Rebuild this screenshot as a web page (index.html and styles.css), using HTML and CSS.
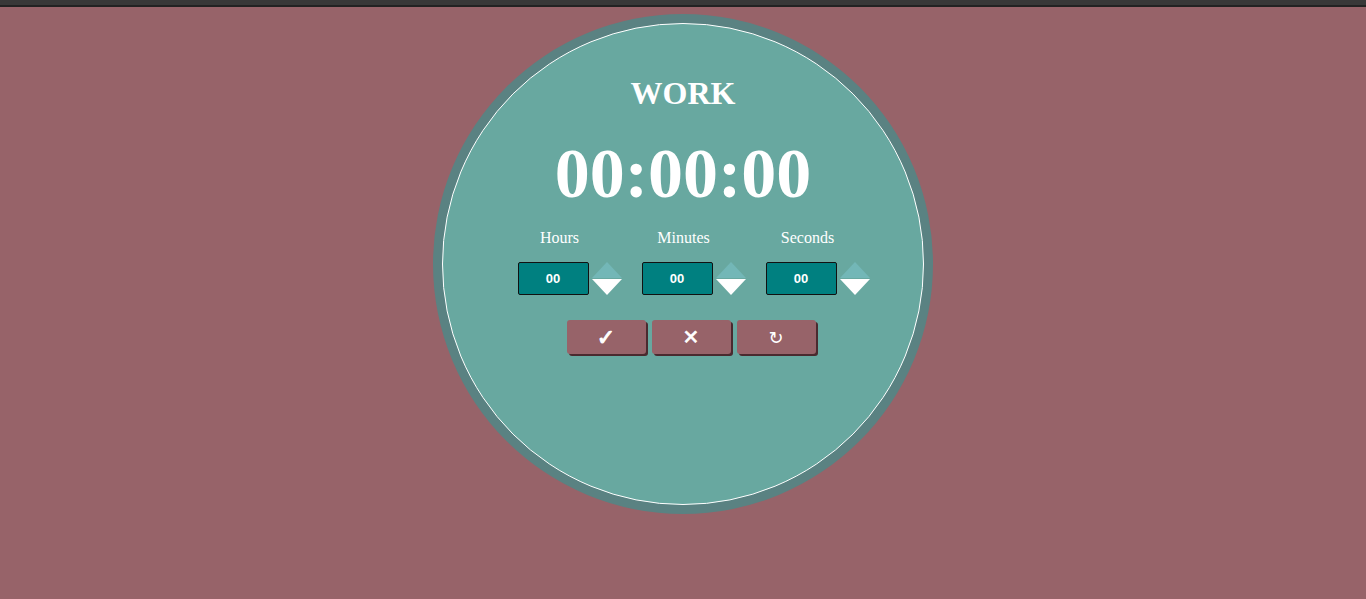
FILE: index.html
```html
<!DOCTYPE html>
<html>
<head>
<meta charset="utf-8">
<link rel="stylesheet" href="styles.css">
</head>
<body>
<div class="topbar"></div>
<main class="stage">
  <div class="ring">
    <div class="face">
      <h1 class="mode">WORK</h1>
      <div class="clock">00:00:00</div>
      <div class="fields">
        <div class="field">
          <div class="label">Hours</div>
          <div class="control">
            <div class="num">00</div>
            <div class="arrows"><span class="up"></span><span class="down"></span></div>
          </div>
        </div>
        <div class="field">
          <div class="label">Minutes</div>
          <div class="control">
            <div class="num">00</div>
            <div class="arrows"><span class="up"></span><span class="down"></span></div>
          </div>
        </div>
        <div class="field">
          <div class="label">Seconds</div>
          <div class="control">
            <div class="num">00</div>
            <div class="arrows"><span class="up"></span><span class="down"></span></div>
          </div>
        </div>
      </div>
      <div class="buttons">
        <button class="btn btn-ok">✓</button>
        <button class="btn btn-x">✕</button>
        <button class="btn btn-reset">↻</button>
      </div>
    </div>
  </div>
</main>
</body>
</html>
```

FILE: styles.css
```css
html, body {
  margin: 0;
  padding: 0;
  background: #976369;
  height: 100%;
  overflow: hidden;
}
body {
  font-family: "Liberation Serif", "Times New Roman", serif;
  color: #fff;
}
.topbar {
  height: 5px;
  background: #383838;
  border-bottom: 2px solid #222;
}
.stage {
  display: flex;
  justify-content: center;
  padding-top: 7px;
}
.ring {
  width: 500px;
  height: 500px;
  box-sizing: border-box;
  border-radius: 50%;
  background: #5a8282;
  padding: 9px;
}
.face {
  width: 482px;
  height: 482px;
  box-sizing: border-box;
  border-radius: 50%;
  border: 1px solid #fff;
  background: #68a8a0;
  display: flex;
  flex-direction: column;
  align-items: center;
  padding-top: 51px;
}
.mode {
  margin: 0;
  font-size: 32px;
  font-weight: bold;
  line-height: 37px;
}
.clock {
  margin-top: 20px;
  font-size: 70px;
  font-weight: bold;
  line-height: 83px;
}
.fields {
  display: flex;
  padding-left: 41px;
  margin-top: 14px;
}
.field {
  width: 124px;
  display: flex;
  flex-direction: column;
}
.label {
  width: 84px;
  text-align: center;
  font-size: 16px;
  line-height: 18px;
}
.control {
  margin-top: 15px;
  display: flex;
  align-items: flex-start;
}
.num {
  width: 71px;
  height: 33px;
  box-sizing: border-box;
  border: 1px solid #111;
  border-radius: 2px;
  background: #008080;
  color: #fff;
  font-family: "Liberation Sans", Arial, sans-serif;
  font-weight: bold;
  font-size: 13px;
  display: flex;
  align-items: center;
  justify-content: center;
}
.arrows {
  margin-left: 3px;
  display: flex;
  flex-direction: column;
}
.up {
  width: 0;
  height: 0;
  border-left: 15px solid transparent;
  border-right: 15px solid transparent;
  border-bottom: 16px solid #73b7b7;
}
.down {
  width: 0;
  height: 0;
  margin-top: 1px;
  border-left: 15px solid transparent;
  border-right: 15px solid transparent;
  border-top: 16px solid #fff;
}
.buttons {
  display: flex;
  gap: 6px;
  padding-left: 16px;
  margin-top: 25px;
}
.btn {
  width: 79px;
  height: 34px;
  border: none;
  border-radius: 3px;
  background: #976369;
  box-shadow: 2px 2px 0 #4a2a2f;
  color: #fff;
  font-family: "DejaVu Sans", sans-serif;
  font-weight: bold;
  font-size: 20px;
  padding: 0;
  display: flex;
  align-items: center;
  justify-content: center;
}
.btn-ok {
  font-size: 22px;
  -webkit-text-stroke: 1px #fff;
}
.btn-x {
  font-size: 20px;
  -webkit-text-stroke: 0.6px #fff;
}
.btn-reset {
  font-weight: normal;
  font-size: 18px;
}
```
